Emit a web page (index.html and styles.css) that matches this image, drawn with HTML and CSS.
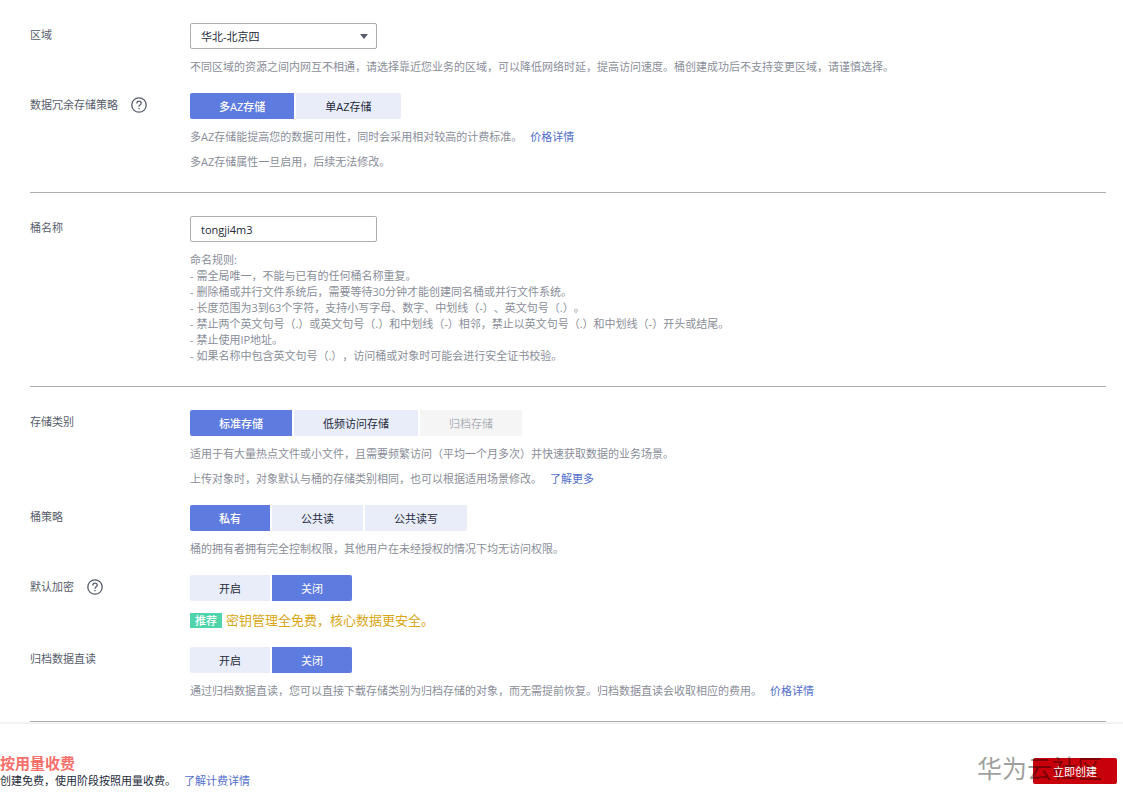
FILE: index.html
```
<!DOCTYPE html>
<html lang="zh-CN">
  <head>
    <meta charset="UTF-8" />
    <title>创建桶</title>
    <link rel="stylesheet" href="styles.css">
  </head>
  <body>
    <form class="bucket-form">
      <section class="section">
        <div class="row">
          <div class="label"><label for="region">区域</label></div>
          <div class="content">
            <div class="select-box">
              <select class="field" id="region">
                <option>华北-北京四</option>
              </select>
            </div>
            <p class="hint">不同区域的资源之间内网互不相通，请选择靠近您业务的区域，可以降低网络时延，提高访问速度。桶创建成功后不支持变更区域，请谨慎选择。</p>
          </div>
        </div>
        <div class="row">
          <div class="label">
            <span id="az-label">数据冗余存储策略</span>
            <svg class="help" viewBox="0 0 16 16">
              <circle cx="8" cy="8" r="7.2" />
              <path d="M5.8 6.5C5.8 5 6.7 4.2 8 4.2s2.2.8 2.2 2c0 1.6-2.2 1.7-2.2 3.5M8 10.9v1.4" />
            </svg>
          </div>
          <div class="content">
            <div class="switch" role="group" aria-labelledby="az-label">
              <button type="button" class="option active strong">多AZ存储</button>
              <button type="button" class="option">单AZ存储</button>
            </div>
            <p class="hint">多AZ存储能提高您的数据可用性，同时会采用相对较高的计费标准。<a class="link" href="#">价格详情</a></p>
            <p class="hint">多AZ存储属性一旦启用，后续无法修改。</p>
          </div>
        </div>
      </section>

      <section class="section">
        <div class="row">
          <div class="label"><label for="bucket-name">桶名称</label></div>
          <div class="content">
            <input class="field" type="text" id="bucket-name" value="tongji4m3" />
            <div class="hint">
              命名规则:<br />
              - 需全局唯一，不能与已有的任何桶名称重复。<br />
              - 删除桶或并行文件系统后，需要等待30分钟才能创建同名桶或并行文件系统。<br />
              - 长度范围为3到63个字符，支持小写字母、数字、中划线（-）、英文句号（.）。<br />
              - 禁止两个英文句号（.）或英文句号（.）和中划线（-）相邻，禁止以英文句号（.）和中划线（-）开头或结尾。<br />
              - 禁止使用IP地址。<br />
              - 如果名称中包含英文句号（.），访问桶或对象时可能会进行安全证书校验。
            </div>
          </div>
        </div>
      </section>

      <section class="section">
        <div class="row">
          <div class="label"><span id="class-label">存储类别</span></div>
          <div class="content">
            <div class="switch" role="group" aria-labelledby="class-label">
              <button type="button" class="option active strong">标准存储</button>
              <button type="button" class="option">低频访问存储</button>
              <button type="button" class="option" disabled>归档存储</button>
            </div>
            <p class="hint">适用于有大量热点文件或小文件，且需要频繁访问（平均一个月多次）并快速获取数据的业务场景。</p>
            <p class="hint">上传对象时，对象默认与桶的存储类别相同，也可以根据适用场景修改。<a class="link" href="#">了解更多</a></p>
          </div>
        </div>
        <div class="row">
          <div class="label"><span id="policy-label">桶策略</span></div>
          <div class="content">
            <div class="switch" role="group" aria-labelledby="policy-label">
              <button type="button" class="option active strong">私有</button>
              <button type="button" class="option">公共读</button>
              <button type="button" class="option">公共读写</button>
            </div>
            <p class="hint">桶的拥有者拥有完全控制权限，其他用户在未经授权的情况下均无访问权限。</p>
          </div>
        </div>
        <div class="row">
          <div class="label">
            <span id="encrypt-label">默认加密</span>
            <svg class="help" viewBox="0 0 16 16">
              <circle cx="8" cy="8" r="7.2" />
              <path d="M5.8 6.5C5.8 5 6.7 4.2 8 4.2s2.2.8 2.2 2c0 1.6-2.2 1.7-2.2 3.5M8 10.9v1.4" />
            </svg>
          </div>
          <div class="content">
            <div class="switch" role="group" aria-labelledby="encrypt-label">
              <button type="button" class="option">开启</button>
              <button type="button" class="option active">关闭</button>
            </div>
            <div class="tip"><span class="tag">推荐</span>密钥管理全免费，核心数据更安全。</div>
          </div>
        </div>
        <div class="row">
          <div class="label"><span id="archive-label">归档数据直读</span></div>
          <div class="content">
            <div class="switch" role="group" aria-labelledby="archive-label">
              <button type="button" class="option">开启</button>
              <button type="button" class="option active">关闭</button>
            </div>
            <p class="hint">通过归档数据直读，您可以直接下载存储类别为归档存储的对象，而无需提前恢复。归档数据直读会收取相应的费用。<a class="link" href="#">价格详情</a></p>
          </div>
        </div>
      </section>
    </form>

    <footer class="footer">
      <div class="billing">
        <div class="price">按用量收费</div>
        <div>创建免费，使用阶段按照用量收费。<a class="link" href="#">了解计费详情</a></div>
      </div>
      <button type="button" class="create"><span class="create-text">立即创建</span></button>
      <span class="watermark">华为云社区</span>
    </footer>
  </body>
</html>
```

FILE: styles.css
```
* {
  box-sizing: border-box;
}
body {
  margin: 0;
  background-color: white;
  color: #252b3a;
  font-family: "Open Sans", "Noto Sans CJK SC", sans-serif;
  font-size: 11px;
  line-height: 16px;
  text-spacing-trim: space-all;
}
button,
input,
select {
  font-family: inherit;
  font-size: inherit;
  color: inherit;
}
.bucket-form {
  padding: 0 17px 0 30px;
}

/* sections and rows */
.section {
  display: flex;
  flex-direction: column;
  gap: 18px;
  padding: 23px 0 22px;
  border-bottom: 1px solid #adadb0;
}
.row {
  display: flex;
}
.label {
  display: flex;
  align-items: center;
  gap: 13px;
  width: 160px;
  height: 24px;
  color: #575d6c;
}
.content {
  flex: 1;
}
.help {
  width: 16px;
  height: 16px;
  fill: none;
  stroke: #575d6c;
  stroke-width: 1.3;
}

/* fields */
.field {
  display: block;
  width: 187px;
  height: 26px;
  padding: 0 10px;
  border: 1px solid #adadb0;
  border-radius: 2px;
  background-color: white;
  appearance: none;
}
.select-box {
  position: relative;
  width: 187px;
}
.select-box::after {
  content: "";
  position: absolute;
  top: 11px;
  right: 9px;
  border: 4px solid transparent;
  border-top: 5px solid #575d6c;
  border-bottom: 0;
  pointer-events: none;
}

/* option buttons */
.switch {
  display: flex;
  gap: 2px;
}
.option {
  height: 26px;
  padding: 0 29px;
  border: 0;
  background-color: #e9edfa;
  cursor: pointer;
}
.option:first-child {
  border-radius: 2px 0 0 2px;
}
.option:last-child {
  border-radius: 0 2px 2px 0;
}
.option.active {
  background-color: #5e7ce0;
  color: white;
}
.option.strong {
  font-weight: 500;
}
.option:disabled {
  background-color: #f5f5f6;
  color: #adb0b8;
  cursor: default;
}

/* texts */
.hint {
  margin: 10px 0 0;
  color: #8a8e99;
}
.hint + .hint {
  margin-top: 9px;
}
.link {
  margin-left: 8px;
  color: #526ecc;
  text-decoration: none;
}
.tip {
  display: flex;
  align-items: center;
  gap: 4px;
  margin: 11px 0 1px;
  color: #d9a615;
  font-size: 13px;
}
.tag {
  padding: 0 5px;
  background-color: #50d4ab;
  color: white;
  font-size: 11px;
  font-weight: 500;
  line-height: 15px;
}

/* bottom bar */
.footer {
  position: relative;
  display: flex;
  align-items: center;
  justify-content: space-between;
  padding: 29px 6px 20px 0;
  border-top: 2px solid #f3f3f4;
}
.price {
  color: #f66f6a;
  font-size: 15px;
  font-weight: bold;
  line-height: 20px;
}
.create {
  height: 26px;
  padding: 0 20px;
  border: 0;
  border-radius: 2px;
  background-color: #c7000b;
  color: white;
  cursor: pointer;
}
.create-text {
  position: relative;
  z-index: 2;
}
.watermark {
  position: absolute;
  top: 28px;
  right: 21px;
  z-index: 1;
  color: rgba(0, 0, 0, 0.4);
  font-size: 25px;
  line-height: 32px;
  pointer-events: none;
}
```
